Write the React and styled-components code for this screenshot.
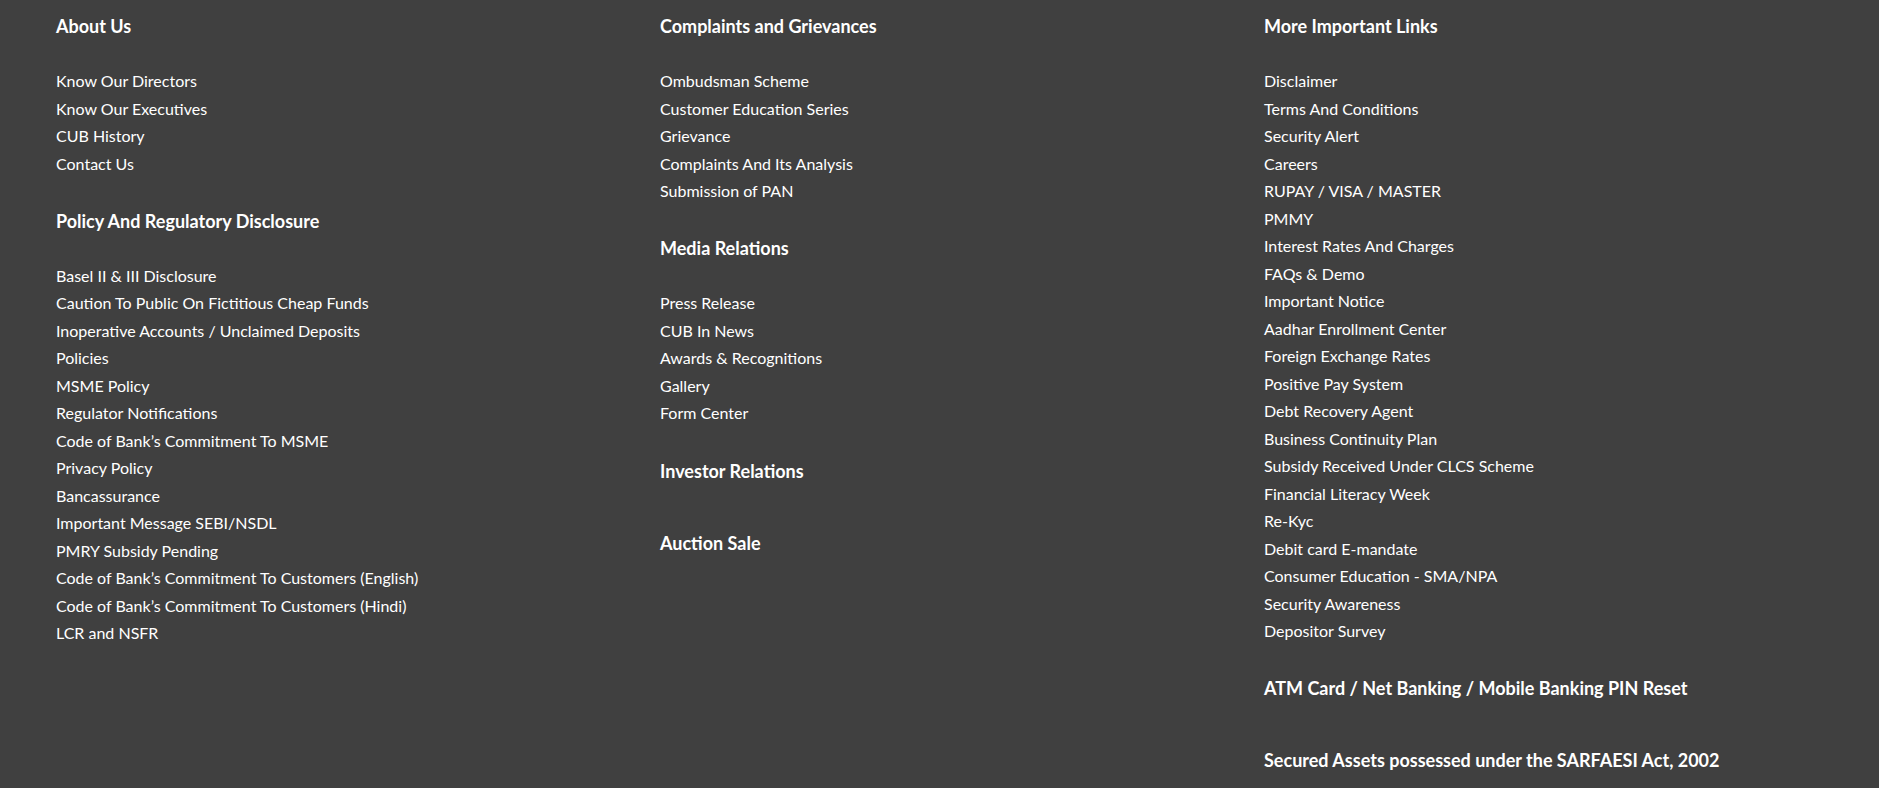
import styled, { createGlobalStyle } from 'styled-components'

const GlobalStyle = createGlobalStyle`
  html, body {
    margin: 0;
    padding: 0;
    background: #404040;
    min-height: 100%;
  }
  body {
    font-family: Lato, "Open Sans", sans-serif;
    color: #fff;
  }
`

const columns = [
  [
    { title: 'About Us', links: ['Know Our Directors', 'Know Our Executives', 'CUB History', 'Contact Us'] },
    {
      title: 'Policy And Regulatory Disclosure',
      links: [
        'Basel II & III Disclosure',
        'Caution To Public On Fictitious Cheap Funds',
        'Inoperative Accounts / Unclaimed Deposits',
        'Policies',
        'MSME Policy',
        'Regulator Notifications',
        'Code of Bank’s Commitment To MSME',
        'Privacy Policy',
        'Bancassurance',
        'Important Message SEBI/NSDL',
        'PMRY Subsidy Pending',
        'Code of Bank’s Commitment To Customers (English)',
        'Code of Bank’s Commitment To Customers (Hindi)',
        'LCR and NSFR',
      ],
    },
  ],
  [
    {
      title: 'Complaints and Grievances',
      links: ['Ombudsman Scheme', 'Customer Education Series', 'Grievance', 'Complaints And Its Analysis', 'Submission of PAN'],
    },
    { title: 'Media Relations', links: ['Press Release', 'CUB In News', 'Awards & Recognitions', 'Gallery', 'Form Center'] },
    { title: 'Investor Relations', links: [] },
    { title: 'Auction Sale', links: [] },
  ],
  [
    {
      title: 'More Important Links',
      links: [
        'Disclaimer',
        'Terms And Conditions',
        'Security Alert',
        'Careers',
        'RUPAY / VISA / MASTER',
        'PMMY',
        'Interest Rates And Charges',
        'FAQs & Demo',
        'Important Notice',
        'Aadhar Enrollment Center',
        'Foreign Exchange Rates',
        'Positive Pay System',
        'Debt Recovery Agent',
        'Business Continuity Plan',
        'Subsidy Received Under CLCS Scheme',
        'Financial Literacy Week',
        'Re-Kyc',
        'Debit card E-mandate',
        'Consumer Education - SMA/NPA',
        'Security Awareness',
        'Depositor Survey',
      ],
    },
    { title: 'ATM Card / Net Banking / Mobile Banking PIN Reset', links: [] },
    { title: 'Secured Assets possessed under the SARFAESI Act, 2002', links: [] },
  ],
]

export default function App() {
  return (
    <>
      <GlobalStyle />
      <Footer>
        {columns.map((sections, i) => (
          <Column key={i}>
            {sections.map(section => (
              <Section key={section.title} $empty={section.links.length === 0}>
                <Heading>{section.title}</Heading>
                {section.links.length > 0 && (
                  <LinkList>
                    {section.links.map(link => (
                      <li key={link}>
                        <FooterLink href="#">{link}</FooterLink>
                      </li>
                    ))}
                  </LinkList>
                )}
              </Section>
            ))}
          </Column>
        ))}
      </Footer>
    </>
  )
}

const Footer = styled.footer`
  display: grid;
  grid-template-columns: repeat(3, 604px);
  padding: 11px 0 0 56px;
  height: 788px;
  box-sizing: border-box;
  overflow: hidden;
  background: #404040;
`

const Column = styled.div`
  display: flex;
  flex-direction: column;
`

const Section = styled.div`
  margin-bottom: ${p => (p.$empty ? '16px' : '28.75px')};
`

const Heading = styled.h4`
  margin: 0 0 26px;
  font-size: 18px;
  line-height: 30px;
  font-weight: 700;
  color: #fff;
  white-space: nowrap;
`

const LinkList = styled.ul`
  list-style: none;
  margin: 0;
  padding: 0;
  font-size: 16px;
  line-height: 27.5px;
`

const FooterLink = styled.a`
  color: #fff;
  text-decoration: none;
  white-space: nowrap;
`
